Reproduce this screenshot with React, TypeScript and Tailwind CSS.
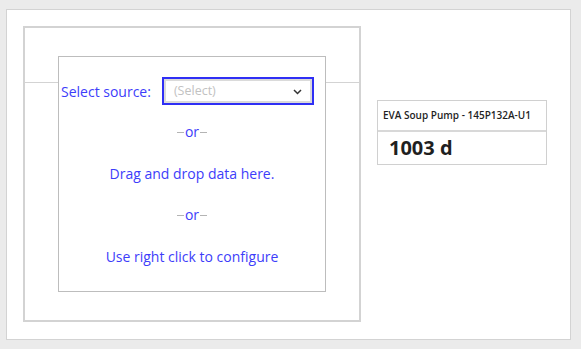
import React from "react";

const Or = () => (
  <div className="flex items-center gap-[1px] text-[14px] text-[#3d3dfa]">
    <span className="w-[7px] h-px bg-[#b4b4b4]"></span>
    <span className="leading-none">or</span>
    <span className="w-[7px] h-px bg-[#b4b4b4]"></span>
  </div>
);

const App = () => {
  return (
    <div
      className="w-[581px] h-[349px] bg-[#ebebeb] pt-[9px] pl-[6px] pr-[10px] pb-[9px]"
      style={{ fontFamily: '"Open Sans", "Liberation Sans", sans-serif' }}
    >
      <div className="w-full h-full bg-white border border-[#d3d3d3] pl-[16px] pt-[16px] flex items-start gap-[16px]">
        {/* source widget */}
        <div className="w-[338px] h-[296px] border-2 border-[#d3d3d3] grid">
          <div className="col-start-1 row-start-1 h-[55px] border-b border-[#d3d3d3]"></div>
          <div className="col-start-1 row-start-1 flex items-center justify-center">
            <div className="w-[268px] h-[236px] bg-white border border-[#bdbdbd] pt-[20px] flex flex-col">
              <div className="flex items-center pl-[2px] gap-[11px]">
                <span className="text-[14px] text-[#3d3dfa]">Select source:</span>
                <div className="w-[152px] h-[28px] border-2 border-[#2f2ff5] p-0">
                  <div className="w-full h-full border-2 border-[#dadada] flex items-center justify-between pl-[8px] pr-[8px] pt-[1px]">
                    <span className="text-[12.5px] text-[#c2c2c2]">(Select)</span>
                    <svg width="9" height="6" viewBox="0 0 9 6" fill="none">
                      <path d="M1 1l3.5 3.5L8 1" stroke="#333" strokeWidth="1.5" />
                    </svg>
                  </div>
                </div>
              </div>
              <div className="mt-[6px] flex flex-col items-center">
                <div className="h-[42px] flex items-center"><Or /></div>
                <div className="h-[41px] flex items-center text-[14px] text-[#3d3dfa]">Drag and drop data here.</div>
                <div className="h-[42px] flex items-center"><Or /></div>
                <div className="h-[40px] flex items-center text-[14px] text-[#3d3dfa]">Use right click to configure</div>
              </div>
            </div>
          </div>
        </div>

        {/* value card */}
        <div className="mt-[74px] w-[170px] border border-[#d0d0d0] text-[#1f1f1f]">
          <div className="h-[31px] flex items-center pl-[5px] text-[10px] font-semibold border-b-2 border-[#d8d8d8] whitespace-nowrap">
            EVA Soup Pump - 145P132A-U1
          </div>
          <div className="h-[32px] flex items-center pl-[11px] text-[20px] font-bold">1003 d</div>
        </div>
      </div>
    </div>
  );
};

export default App;
